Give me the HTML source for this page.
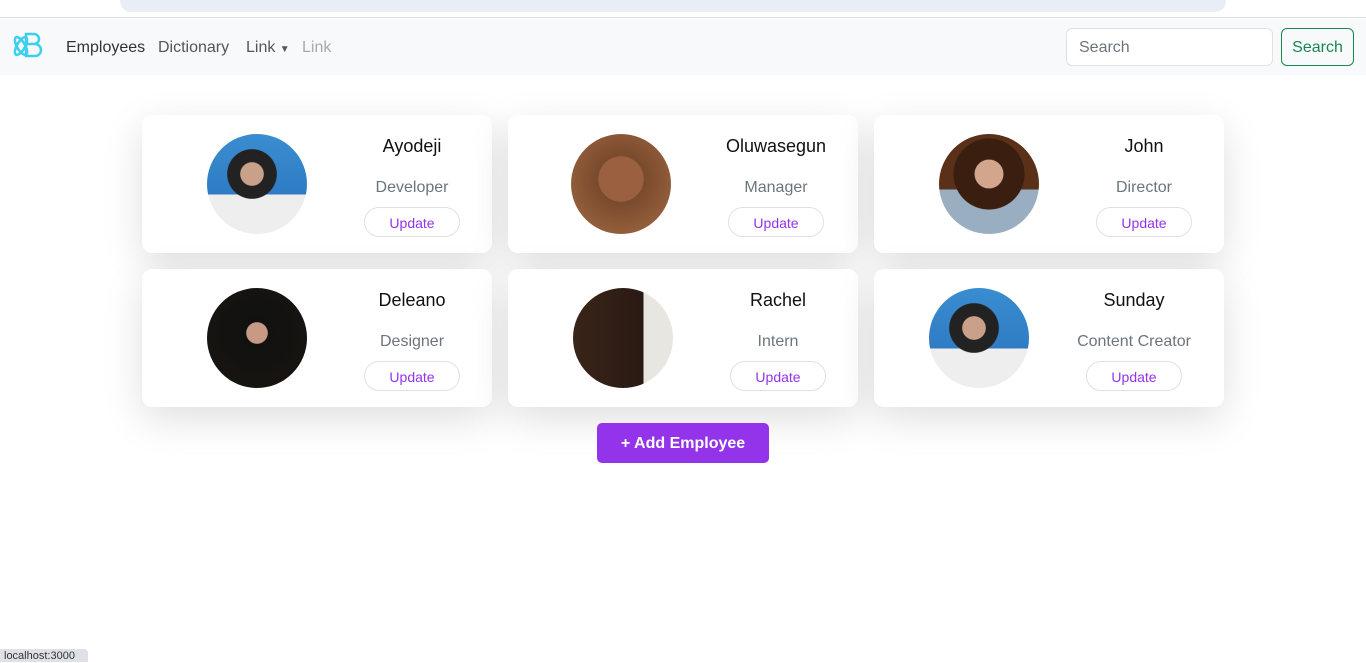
<!DOCTYPE html>
<html><head><meta charset="utf-8"><style>
*{box-sizing:border-box;margin:0;padding:0}
body{width:1366px;height:662px;background:#fff;font-family:"Liberation Sans",sans-serif;position:relative;overflow:hidden}
.chrome{position:absolute;left:0;top:0;width:1366px;height:18px;background:#fff;border-bottom:1px solid #dadce0}
.addr{position:absolute;left:120px;top:-10px;width:1106px;height:22px;border-radius:11px;background:#e9edf6}
.nav{position:absolute;top:19px;left:0;width:1366px;height:56px;background:#f8f9fa}
.nav a{position:absolute;top:20px;font-size:16px;color:#333;text-decoration:none}
.search{position:absolute;left:1066px;top:9px;width:207px;height:38px;border:1px solid #dee2e6;border-radius:6px;background:#fff;font-size:16px;color:#6c757d;padding:10px 12px}
.sbtn{position:absolute;left:1281px;top:9px;width:73px;height:38px;border:1px solid #198754;border-radius:6px;color:#198754;font-size:16px;text-align:center;line-height:38px}
.card{position:absolute;width:350px;height:138px;background:#fff;border-radius:10px;box-shadow:0 12px 40px rgba(0,0,0,.13)}
.av{position:absolute;left:65px;top:19px;width:100px;height:100px;border-radius:50%}
.txt{position:absolute;left:200px;width:140px;top:0;text-align:center}
.nm{position:absolute;top:21px;width:100%;font-size:18px;color:#111}
.rl{position:absolute;top:64px;width:100%;font-size:16px;color:#6c757d}
.up{position:absolute;top:92px;left:22px;width:96px;height:30px;border:1px solid #dee2e6;border-radius:15px;color:#9333ea;font-size:14px;line-height:30px;text-align:center}
.add{position:absolute;left:597px;top:423px;width:172px;height:40px;background:#9333ea;border-radius:5px;color:#fff;font-weight:bold;font-size:16px;text-align:center;line-height:41px}
.st{position:absolute;left:0;top:649px;width:88px;height:13px;background:#dee1e6;border-top-right-radius:4px;font-size:11px;color:#333;padding-left:4px;line-height:14px}
</style></head><body>
<div class="chrome"><div class="addr"></div></div>
<div class="nav">
<svg style="position:absolute;left:11px;top:12px" width="34" height="32" viewBox="0 0 34 32"><g fill="none" stroke="#3ccff0" stroke-width="2.5"><ellipse cx="10" cy="15" rx="10" ry="4" transform="rotate(60 10 15)"/><ellipse cx="10" cy="15" rx="10" ry="4" transform="rotate(-60 10 15)"/><path d="M15 3h8a5 5 0 0 1 0 10h-8zM15 13h9a6 6 0 0 1 0 12h-9z"/></g></svg>
<a style="left:66px">Employees</a><a style="left:158px;color:#555">Dictionary</a><a style="left:246px;color:#555">Link <span style="font-size:10px">▼</span></a><a style="left:302px;color:#aaa">Link</a>
<div class="search">Search</div><div class="sbtn">Search</div>
</div>

<div class="card" style="left:142px;top:115px"><div class="av" style="background:radial-gradient(circle at 45% 40%,#c9a08a 0 14%,#222 15% 30%,transparent 31%),linear-gradient(180deg,#3a8dd0 0,#2f7cc4 60%,#eee 61%)"></div><div class="txt"><div class="nm">Ayodeji</div><div class="rl">Developer</div><div class="up">Update</div></div></div>
<div class="card" style="left:508px;top:115px"><div class="av" style="left:63px;background:radial-gradient(circle at 50% 45%,#9b6040 0 30%,#7a4a2e 31%,#a36b43 100%)"></div><div class="txt" style="left:198px"><div class="nm">Oluwasegun</div><div class="rl">Manager</div><div class="up">Update</div></div></div>
<div class="card" style="left:874px;top:115px"><div class="av" style="background:radial-gradient(circle at 50% 40%,#d2a58c 0 18%,#3a1e10 19% 45%,transparent 46%),linear-gradient(180deg,#5a3018 0,#5a3018 55%,#9aaec2 56%)"></div><div class="txt"><div class="nm">John</div><div class="rl">Director</div><div class="up">Update</div></div></div>
<div class="card" style="left:142px;top:269px"><div class="av" style="background:radial-gradient(circle at 50% 45%,#c89a85 0 14%,#111 15%,#1a1510 100%)"></div><div class="txt"><div class="nm">Deleano</div><div class="rl">Designer</div><div class="up">Update</div></div></div>
<div class="card" style="left:508px;top:269px"><div class="av" style="background:linear-gradient(90deg,#3a2418 0,#2a1a14 70%,#e8e6e0 71%)"></div><div class="txt"><div class="nm">Rachel</div><div class="rl">Intern</div><div class="up">Update</div></div></div>
<div class="card" style="left:874px;top:269px"><div class="av" style="left:55px;background:radial-gradient(circle at 45% 40%,#c9a08a 0 14%,#222 15% 30%,transparent 31%),linear-gradient(180deg,#3a8dd0 0,#2f7cc4 60%,#eee 61%)"></div><div class="txt" style="left:190px;width:140px"><div class="nm">Sunday</div><div class="rl">Content Creator</div><div class="up">Update</div></div></div>

<div class="add">+ Add Employee</div>
<div class="st">localhost:3000</div>
</body></html>
